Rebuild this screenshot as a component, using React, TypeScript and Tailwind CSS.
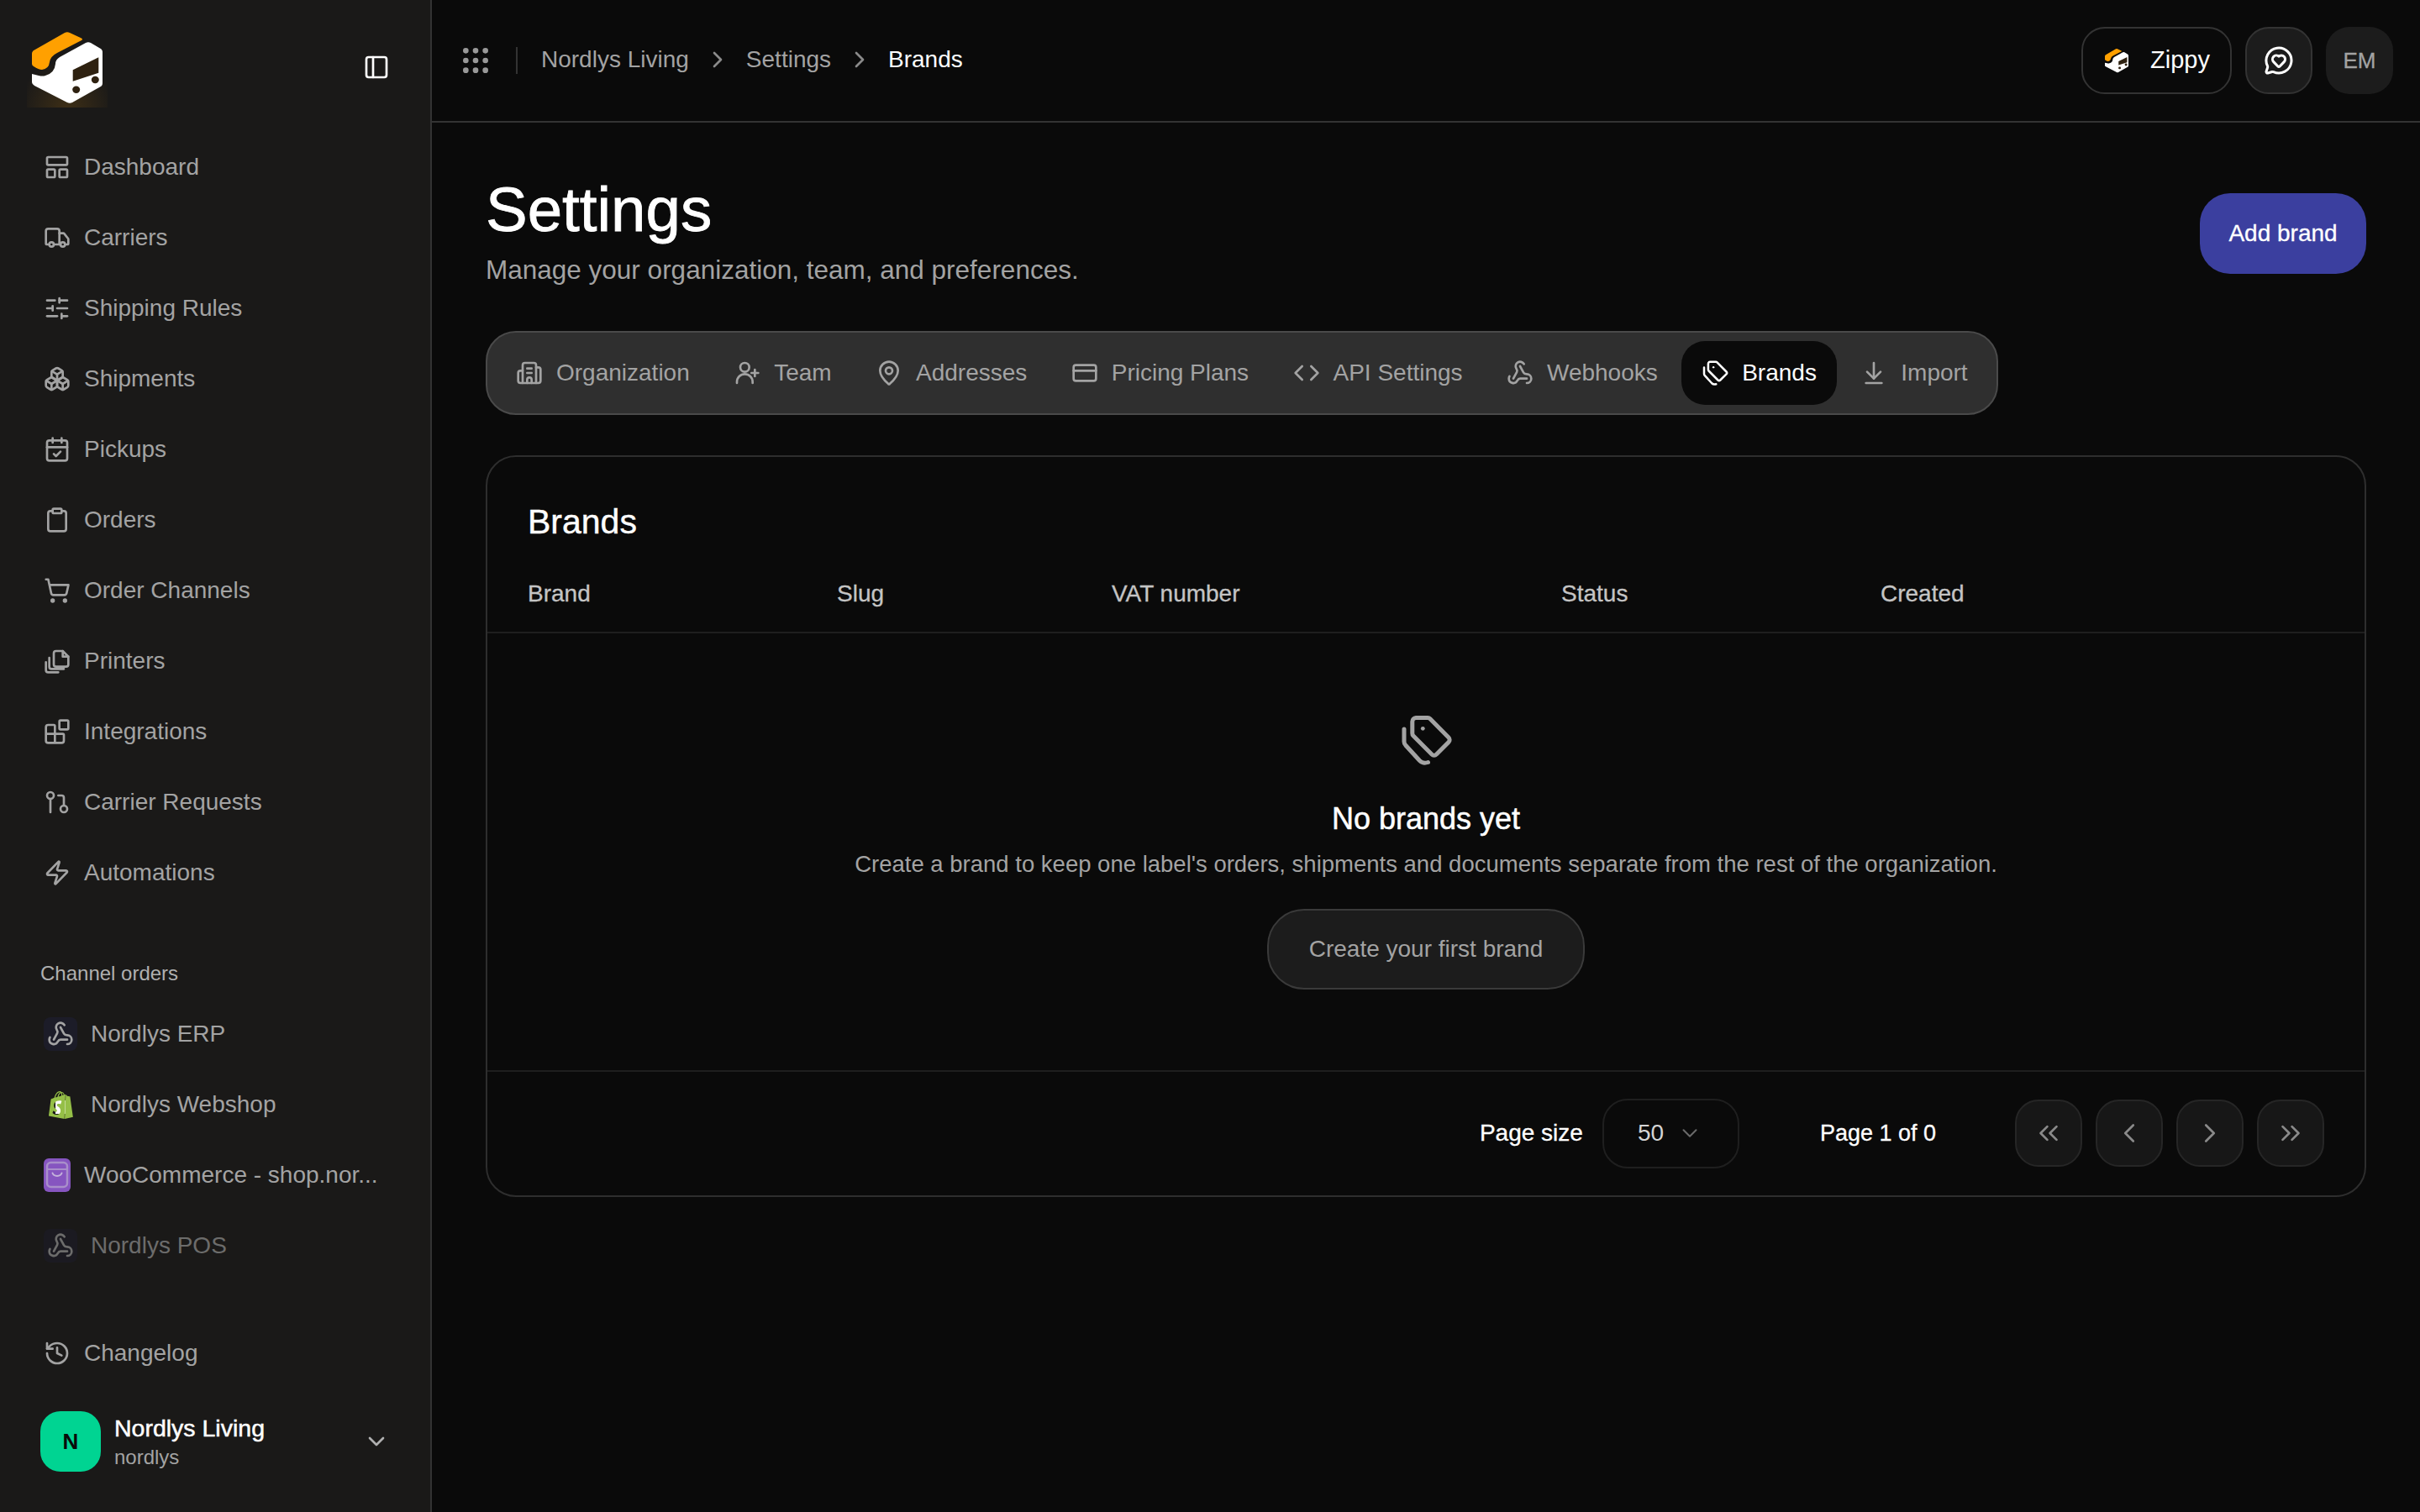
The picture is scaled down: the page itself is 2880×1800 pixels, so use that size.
import type { ReactNode } from "react";
import {
  ArrowDownToLine,
  Blocks,
  Boxes,
  Building2,
  CalendarCheck,
  ChevronDown,
  ChevronLeft,
  ChevronRight,
  ChevronsLeft,
  ChevronsRight,
  Clipboard,
  Code,
  CreditCard,
  GitPullRequest,
  Grip,
  History,
  LayoutPanelTop,
  MapPin,
  MessageCircleHeart,
  PanelLeft,
  ShoppingCart,
  SlidersHorizontal,
  Truck,
  Webhook,
  Zap,
} from "lucide-react";
import { SiShopify } from "react-icons/si";

function Logo({ size, glow = false }: { size: number; glow?: boolean }) {
  return (
    <svg width={size} height={size} viewBox="0 0 96 96" fill="none">
      <defs>
        <radialGradient id="logoGlow" cx="50%" cy="100%" r="60%">
          <stop offset="0%" stopColor="#f59e0b" stopOpacity="0.16" />
          <stop offset="100%" stopColor="#f59e0b" stopOpacity="0" />
        </radialGradient>
      </defs>
      {glow && <rect width="96" height="96" fill="url(#logoGlow)" />}
      <path
        d="M6 32 Q6 29 9 27.5 L45 7 Q48 5.5 51 7 L65 13.5 Q67 15 65 16 L36 31 Q28 35 27 42 Q26 50 18 51 Q14 51 8 47 Q6 46 6 44 Z"
        fill="#ffa000"
      />
      <path
        d="M6 56 L14 58 Q19 59 22 58 Q33 55 34 44 Q34 39 39 36 L70 19 Q73 17.5 76 19 L87 25.5 Q90 27 90 30 L90 67 Q90 70 87 71.5 L54 90 Q51 91.5 48 90 L9 70 Q6 68 6 66 Z"
        fill="#ffffff"
      />
      <path d="M54.7 51.3 L85.3 36.3 L85.3 54.7 L54.7 64.7 Z" fill="#2e2110" />
      <ellipse cx="58.7" cy="74.7" rx="4.5" ry="4.2" fill="#2e2110" />
      <ellipse cx="81.3" cy="63" rx="4.5" ry="4.2" fill="#2e2110" />
    </svg>
  );
}

// tag pair as drawn in the reference, lucide's Tags sits differently
function BrandTags({ size = 32 }: { size?: number }) {
  return (
    <svg width={size} height={size} viewBox="0 0 64 64" fill="none" stroke="currentColor" strokeWidth="5" strokeLinecap="round" strokeLinejoin="round" className="shrink-0">
      <path d="M20 5.5H34a4 4 0 0 1 3 1.2L59 29a4 4 0 0 1 0 5.6L44.5 49a4 4 0 0 1-5.6 0L17 27a4 4 0 0 1-1.2-3V10a4.5 4.5 0 0 1 4.2-4.5Z" />
      <path d="M6 19v15a6 6 0 0 0 1.8 4.2L24.5 56.5c3 3 7 3 10 2" />
      <circle cx="28.3" cy="18.3" r="2.4" fill="currentColor" stroke="none" />
    </svg>
  );
}

function PrintersIcon({ size = 32 }: { size?: number }) {
  return (
    <svg width={size} height={size} viewBox="0 0 24 24" fill="none" stroke="currentColor" strokeWidth="2" strokeLinecap="round" strokeLinejoin="round">
      <path d="M9 5a2 2 0 0 1 2-2h6l5 5v7a2 2 0 0 1-2 2h-9a2 2 0 0 1-2-2z" />
      <path d="M17 3v5h5" />
      <path d="M5 9v8a2 2 0 0 0 2 2h11" />
      <path d="M2 13v7a2 2 0 0 0 2 2h9" />
    </svg>
  );
}

function TeamIcon({ size = 32 }: { size?: number }) {
  return (
    <svg width={size} height={size} viewBox="0 0 24 24" fill="none" stroke="currentColor" strokeWidth="2" strokeLinecap="round" strokeLinejoin="round">
      <circle cx="10" cy="7" r="4" />
      <path d="M3 21v-1a7 7 0 0 1 14 0v1" />
      <path d="M19 9v6" />
      <path d="M16 12h6" />
    </svg>
  );
}

const navItems = [
  { label: "Dashboard", icon: LayoutPanelTop },
  { label: "Carriers", icon: Truck },
  { label: "Shipping Rules", icon: SlidersHorizontal },
  { label: "Shipments", icon: Boxes },
  { label: "Pickups", icon: CalendarCheck },
  { label: "Orders", icon: Clipboard },
  { label: "Order Channels", icon: ShoppingCart },
  { label: "Printers", icon: PrintersIcon },
  { label: "Integrations", icon: Blocks },
  { label: "Carrier Requests", icon: GitPullRequest },
  { label: "Automations", icon: Zap },
];

const tabs = [
  { label: "Organization", icon: Building2 },
  { label: "Team", icon: TeamIcon },
  { label: "Addresses", icon: MapPin },
  { label: "Pricing Plans", icon: CreditCard },
  { label: "API Settings", icon: Code },
  { label: "Webhooks", icon: Webhook },
  { label: "Brands", icon: BrandTags, active: true },
  { label: "Import", icon: ArrowDownToLine },
];

function ChannelRow({ icon, label, dim = false }: { icon: ReactNode; label: string; dim?: boolean }) {
  return (
    <div className={`flex h-[84px] items-center gap-4 pl-[52px] ${dim ? "opacity-60" : ""}`}>
      {icon}
      <span className="text-[28px] whitespace-nowrap text-[#a3a3a3]">{label}</span>
    </div>
  );
}

function WebhookBox() {
  return (
    <div className="flex h-10 w-10 shrink-0 items-center justify-center rounded-lg bg-[#1c1c28]">
      <Webhook size={32} className="text-[#a3a3a3]" />
    </div>
  );
}

function PagerButton({ children }: { children: ReactNode }) {
  return (
    <button className="flex h-20 w-20 items-center justify-center rounded-[28px] border-2 border-[#262626] bg-[#171717] text-[#8a8a8a]">
      {children}
    </button>
  );
}

export default function App() {
  return (
    <div className="flex h-[1800px] w-[2880px] overflow-hidden bg-[#0a0a0a] font-['Liberation_Sans',Arial,sans-serif] text-white">
      {/* Sidebar */}
      <aside className="flex w-[514px] shrink-0 flex-col border-r-2 border-[#333333] bg-[#1a1918] pb-12">
        <div className="flex h-[157px] shrink-0 items-start justify-between pl-8 pr-12 pt-8">
          <Logo size={96} glow />
          <div className="flex h-24 items-center">
            <PanelLeft size={32} className="text-white" />
          </div>
        </div>

        <nav className="flex flex-col">
          {navItems.map((item) => (
            <div key={item.label} className="flex h-[84px] items-center gap-4 pl-[52px] text-[#a3a3a3]">
              <item.icon size={32} />
              <span className="text-[28px]">{item.label}</span>
            </div>
          ))}
        </nav>

        <div className="mt-[63px] pl-12 text-[24px] leading-[30px] text-[#b0b0b0]">Channel orders</div>
        <div className="mt-[15px] flex flex-col">
          <ChannelRow icon={<WebhookBox />} label="Nordlys ERP" />
          <ChannelRow
            icon={
              <div className="relative flex h-10 w-10 shrink-0 items-center justify-center">
                <div className="absolute left-[14px] top-[15px] h-[16px] w-[12px] bg-white" />
                <SiShopify size={33} className="relative text-[#95bf47]" />
              </div>
            }
            label="Nordlys Webshop"
          />
          <ChannelRow
            icon={
              <svg width="32" height="40" viewBox="0 0 32 40" className="shrink-0" fill="none">
                <rect width="32" height="40" rx="6" fill="#8655c0" />
                <rect x="4" y="5" width="24" height="29" rx="4.5" stroke="#a98fca" strokeWidth="2.5" />
                <path d="M5 13h22" stroke="#a98fca" strokeWidth="2" />
                <path d="M10.5 17.5c1.5 4.5 9.5 4.5 11 0" stroke="#c4b2da" strokeWidth="2" strokeLinecap="round" />
              </svg>
            }
            label="WooCommerce - shop.nor..."
          />
          <ChannelRow icon={<WebhookBox />} label="Nordlys POS" dim />
        </div>

        <div className="mt-auto flex h-[84px] items-center gap-4 pl-[52px] text-[#a3a3a3]">
          <History size={32} />
          <span className="text-[28px]">Changelog</span>
        </div>
        <div className="mt-[27px] flex h-[72px] items-center pl-12 pr-12">
          <div className="flex h-[72px] w-[72px] items-center justify-center rounded-[24px] bg-[#00d492] text-[26px] font-bold text-[#0a0a0a]">
            N
          </div>
          <div className="ml-4 flex-1">
            <div className="text-[28.5px] leading-[36px] text-white [-webkit-text-stroke:0.5px_#ffffff]">Nordlys Living</div>
            <div className="text-[24px] leading-[33px] text-[#a3a3a3]">nordlys</div>
          </div>
          <ChevronDown size={32} className="text-[#b0b0b0]" />
        </div>
      </aside>

      {/* Main */}
      <main className="flex min-w-0 flex-1 flex-col">
        <header className="flex h-[146px] shrink-0 items-center justify-between border-b-2 border-[#333333] pl-8 pr-8">
          <div className="flex items-center">
            <Grip size={40} className="text-[#999999]" />
            <div className="ml-7 mr-7 h-8 w-0.5 bg-[#333333]" />
            <div className="flex -translate-y-px items-center gap-[18px] text-[28px] text-[#a3a3a3]">
              <span>Nordlys Living</span>
              <ChevronRight size={32} className="text-[#8a8a8a]" />
              <span>Settings</span>
              <ChevronRight size={32} className="text-[#8a8a8a]" />
              <span className="text-white">Brands</span>
            </div>
          </div>
          <div className="flex items-center gap-4">
            <button className="flex h-20 w-[179px] items-center gap-6 rounded-[28px] border-2 border-[#333333] bg-[#0a0a0a] px-6 text-[29px] text-white">
              <Logo size={32} />
              <span>Zippy</span>
            </button>
            <button className="flex h-20 w-20 items-center justify-center rounded-[28px] border-2 border-[#333333] bg-[#1c1c1c]">
              <MessageCircleHeart size={36} className="text-white" />
            </button>
            <div className="flex h-20 w-20 items-center justify-center rounded-[28px] bg-[#1c1c1c] text-[26px] text-[#a3a3a3] [-webkit-text-stroke:0.3px_#a3a3a3]">
              EM
            </div>
          </div>
        </header>

        <div className="px-16 pt-16">
          <div className="flex items-center justify-between">
            <div>
              <h1 className="h-[80px] text-[74.5px] leading-[80px] text-white [-webkit-text-stroke:0.8px_#ffffff]">Settings</h1>
              <p className="mt-[6px] text-[31.5px] leading-[50px] text-[#a3a3a3]">Manage your organization, team, and preferences.</p>
            </div>
            <button className="flex h-24 w-[198px] items-center justify-center rounded-[36px] bg-[#3b3f9f] text-[28px] text-white [-webkit-text-stroke:0.3px_#ffffff]">
              Add brand
            </button>
          </div>

          <div className="mt-12 flex w-fit gap-[4.4px] rounded-[36px] border-2 border-[#4a4a4a] bg-[#2f2f2f] p-[10px]">
            {tabs.map((tab) => (
              <div
                key={tab.label}
                className={`flex h-[76px] items-center gap-4 rounded-[28px] px-6 text-[28px] ${
                  tab.active ? "bg-[#0a0a0a] text-white" : "text-[#a3a3a3]"
                }`}
              >
                <tab.icon size={32} />
                <span>{tab.label}</span>
              </div>
            ))}
          </div>

          <section className="mt-12 h-[883px] rounded-[36px] border-2 border-[#2e2e2e]">
            <h2 className="ml-12 mt-[52px] h-[50px] text-[41px] leading-[50px] text-white [-webkit-text-stroke:0.4px_#ffffff]">Brands</h2>
            <div className="mt-[38px] flex h-[46px] items-center pl-12 text-[28px] text-[#c4c4c4] [-webkit-text-stroke:0.3px_#c4c4c4]">
              <div className="w-[368px]">Brand</div>
              <div className="w-[327px]">Slug</div>
              <div className="w-[535px]">VAT number</div>
              <div className="w-[380px]">Status</div>
              <div>Created</div>
            </div>
            <div className="mt-[22px] h-0.5 bg-[#1f1f1f]" />

            <div className="flex h-[520px] flex-col items-center pt-[95px]">
              <div className="text-[#a3a3a3]">
                <BrandTags size={64} />
              </div>
              <h3 className="mt-[39px] h-[46px] text-[36px] leading-[46px] text-white [-webkit-text-stroke:0.5px_#ffffff]">No brands yet</h3>
              <p className="mt-[11px] text-[27.5px] leading-[40px] text-[#a3a3a3]">
                Create a brand to keep one label's orders, shipments and documents separate from the rest of the organization.
              </p>
              <button className="mt-[33px] flex h-[96px] w-[378px] items-center justify-center rounded-[44px] border-2 border-[#3a3a3a] bg-[#1c1c1c] text-[28px] text-[#a3a3a3]">
                Create your first brand
              </button>
            </div>

            <div className="h-0.5 bg-[#1f1f1f]" />
            <div className="flex h-[146px] items-center justify-end pr-[48px]">
              <span className="text-[28px] text-white [-webkit-text-stroke:0.3px_#ffffff]">Page size</span>
              <div className="ml-[23px] flex h-[83px] w-[163px] items-center gap-4 rounded-[30px] border-2 border-[#1f1f1f] pl-10 text-[28px] text-[#d4d4d4]">
                <span>50</span>
                <ChevronDown size={30} strokeWidth={1.6} className="text-[#6a6a6a]" />
              </div>
              <span className="ml-[96px] mr-[94px] text-[27px] text-white [-webkit-text-stroke:0.3px_#ffffff]">Page 1 of 0</span>
              <div className="flex gap-4">
                <PagerButton><ChevronsLeft size={38} strokeWidth={1.7} /></PagerButton>
                <PagerButton><ChevronLeft size={38} strokeWidth={1.7} /></PagerButton>
                <PagerButton><ChevronRight size={38} strokeWidth={1.7} /></PagerButton>
                <PagerButton><ChevronsRight size={38} strokeWidth={1.7} /></PagerButton>
              </div>
            </div>
          </section>
        </div>
      </main>
    </div>
  );
}
